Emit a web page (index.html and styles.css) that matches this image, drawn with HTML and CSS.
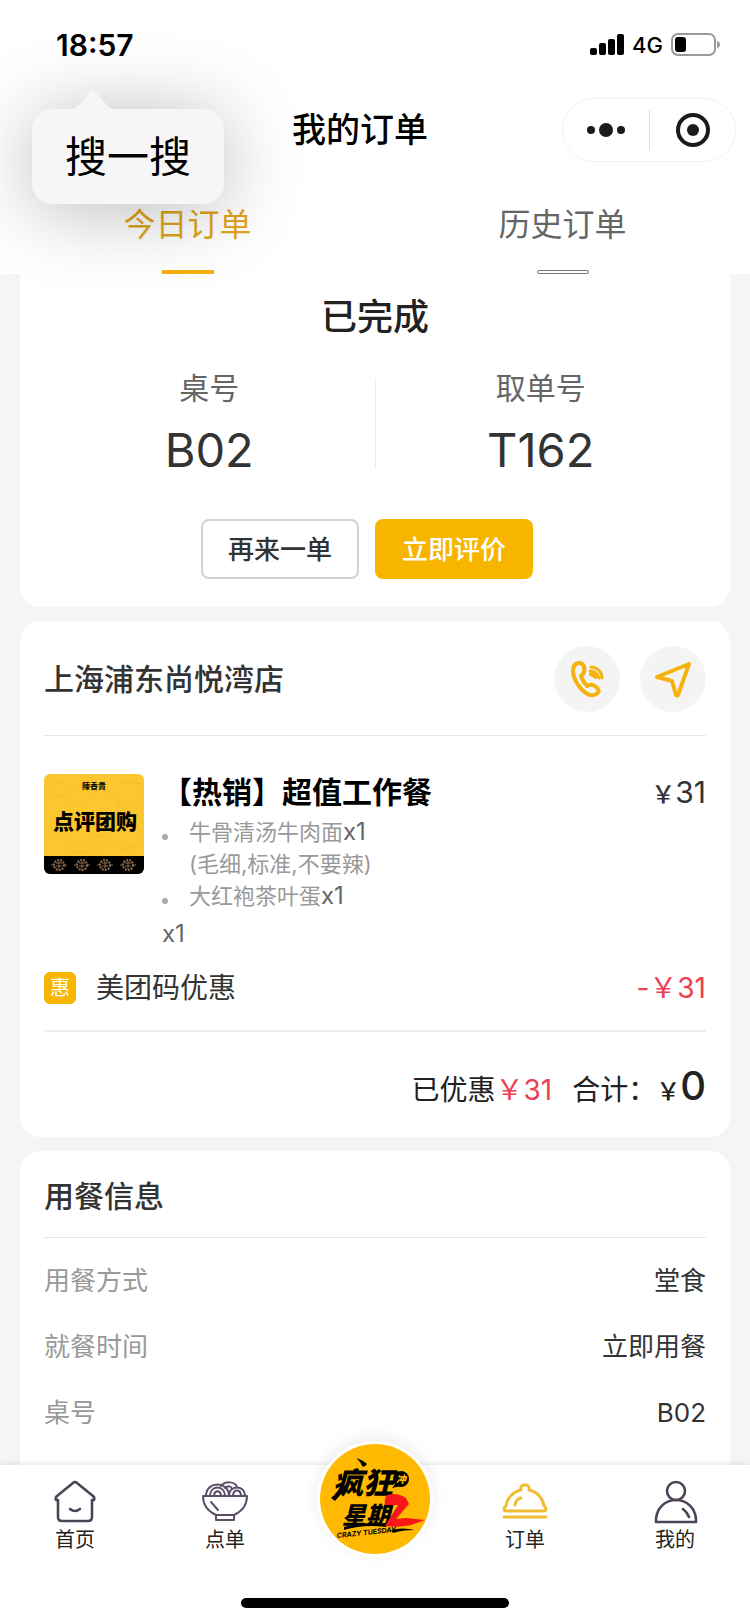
FILE: index.html
```html
<!DOCTYPE html>
<html lang="zh-CN">
<head>
  <meta charset="UTF-8" />
  <meta name="viewport" content="width=device-width, initial-scale=1.0"/>
  <title>我的订单</title>
  <link rel="stylesheet" href="styles.css">
</head>
<body>
  <!-- Header -->
  <header class="header">
    <div class="status-bar">
      <span class="time">18:57</span>
      <div class="status-icons">
        <svg width="34" height="22" viewBox="0 0 34 22">
          <rect x="0" y="14" width="7" height="7" rx="2"/>
          <rect x="9" y="9" width="7" height="12" rx="2"/>
          <rect x="18" y="5" width="7" height="16" rx="2"/>
          <rect x="27" y="0" width="7" height="21" rx="2"/>
        </svg>
        <span class="network">4G</span>
        <svg width="49" height="24" viewBox="0 0 49 24">
          <rect x="1" y="1" width="43" height="21" rx="6" fill="#fff" stroke="#999" stroke-width="2"/>
          <rect x="4" y="4" width="11" height="15" rx="3"/>
          <path d="M46 8c4 1 4 6 0 7z" fill="#999"/>
        </svg>
      </div>
    </div>

    <div class="nav-bar">
      <h1>我的订单</h1>
      <div class="capsule">
        <button type="button" aria-label="更多">
          <svg width="38" height="14" viewBox="0 0 38 14" fill="#1a1a1a">
            <circle cx="4" cy="7" r="4"/>
            <circle cx="19" cy="7" r="7"/>
            <circle cx="34" cy="7" r="4"/>
          </svg>
        </button>
        <button type="button" aria-label="关闭">
          <svg width="36" height="36" viewBox="0 0 36 36">
            <circle cx="18" cy="18" r="15" fill="none" stroke="#1a1a1a" stroke-width="4"/>
            <circle cx="18" cy="18" r="6" fill="#1a1a1a"/>
          </svg>
        </button>
      </div>
    </div>

    <div class="tabs">
      <button type="button" class="tab active">今日订单</button>
      <button type="button" class="tab">历史订单</button>
    </div>

    <a href="#search" class="popover">
      <svg class="popover-arrow" width="56" height="21" viewBox="0 0 56 21">
        <path d="M0 21C8 21 12 19 16 15L25 3Q28 -1 31 3L41 14C45 19 49 21 56 21Z" fill="#f6f6f6"/>
      </svg>
      搜一搜
    </a>
  </header>

  <!-- Order content -->
  <main class="content">
    <section class="card status-card">
      <h2>已完成</h2>
      <div class="numbers">
        <div class="number">
          <span>桌号</span>
          <strong>B02</strong>
        </div>
        <div class="divider"></div>
        <div class="number">
          <span>取单号</span>
          <strong>T162</strong>
        </div>
      </div>
      <div class="actions">
        <button type="button" class="btn">再来一单</button>
        <button type="button" class="btn btn-primary">立即评价</button>
      </div>
    </section>

    <section class="card">
      <div class="store">
        <h3>上海浦东尚悦湾店</h3>
        <div class="store-actions">
          <button type="button" class="round-btn" aria-label="电话">
            <svg width="36" height="40" viewBox="0 0 36 40" fill="none" stroke="#f5b20f" stroke-width="4" stroke-linejoin="round" stroke-linecap="round">
              <path d="M14 15C17 10 15 4 10 4C5 4 4 8 4 13C5 23 14 34 21 36C27 37 31 33 29 30C27 27 23 25 20 26L18 27C15 24 13 20 12 17Z"/>
              <path d="M22 8C28 8 33 13 33 19" stroke-width="3"/>
              <path d="M21 12C25 12 29 15 30 19" stroke-width="3"/>
              <path d="M22 15L27 18" stroke-width="4"/>
            </svg>
          </button>
          <button type="button" class="round-btn" aria-label="导航">
            <svg width="38" height="38" viewBox="0 0 38 38" fill="none" stroke="#f5b20f" stroke-width="4" stroke-linejoin="round">
              <path d="M35 4L3 17L18 21L22 35Q23 36 24 35Z"/>
            </svg>
          </button>
        </div>
      </div>

      <div class="item">
        <svg class="thumb" width="100" height="100" viewBox="0 0 100 100">
          <rect width="100" height="100" fill="#fcc62f"/>
          <g fill="none" stroke="#e8b02b" stroke-width="1" opacity=".4">
            <path d="M0 27Q14 16 24 27T48 22T72 27T100 16"/>
            <path d="M3 14Q14 4 24 13T44 7M74 12Q84 5 98 11"/>
            <path d="M2 66Q13 57 24 67T48 66T72 70T99 60"/>
            <path d="M20 76Q40 83 60 72T90 75M72 33Q85 26 98 35"/>
          </g>
          <text class="thumb-brand" x="50" y="15">陳香貴</text>
          <text class="thumb-title" x="51" y="55">点评团购</text>
          <rect y="82" width="100" height="18"/>
          <g fill="none" stroke="#8a6a4c">
            <g id="seal">
              <circle cx="15" cy="91" r="5" stroke-width="2" stroke-dasharray="2 1"/>
              <path d="M7 91h4M19 91h4M12 89h6M12 92h6M15 87v8"/>
            </g>
            <use href="#seal" x="23"/>
            <use href="#seal" x="46"/>
            <use href="#seal" x="69"/>
          </g>
        </svg>
        <div class="item-info">
          <h4>【热销】超值工作餐</h4>
          <ul>
            <li>牛骨清汤牛肉面<span>x1</span><br>(毛细,标准,不要辣)</li>
            <li>大红袍茶叶蛋<span>x1</span></li>
          </ul>
          <p>x1</p>
        </div>
        <div class="price"><small>￥</small>31</div>
      </div>

      <div class="discount">
        <span class="badge">惠</span>
        <span>美团码优惠</span>
        <span class="red">-￥31</span>
      </div>

      <div class="total">
        <span>已优惠<span class="red">￥31</span></span>
        <span>合计：</span>
        <span class="total-price"><small>￥</small>0</span>
      </div>
    </section>

    <section class="card info-card">
      <h3>用餐信息</h3>
      <dl>
        <div><dt>用餐方式</dt><dd>堂食</dd></div>
        <div><dt>就餐时间</dt><dd>立即用餐</dd></div>
        <div><dt>桌号</dt><dd>B02</dd></div>
      </dl>
    </section>
  </main>

  <!-- Bottom tab bar -->
  <footer class="footer">
    <nav class="tab-bar">
      <a href="#home">
        <svg width="48" height="48" viewBox="0 0 48 48" fill="none" stroke="#4d4357" stroke-width="2.6" stroke-linejoin="round" stroke-linecap="round">
          <path d="M24 5Q25 5 26 6L42 19Q44 21 43 23H41V40Q41 44 37 44H11Q7 44 7 40V23H5Q4 21 6 19L22 6Q23 5 24 5Z"/>
          <path d="M19 32Q24 36 29 32"/>
        </svg>
        首页
      </a>
      <a href="#menu">
        <svg width="48" height="48" viewBox="0 0 48 48" fill="none" stroke="#5c4e69" stroke-width="2" stroke-linejoin="round" stroke-linecap="round">
          <path d="M2 19H46Q46 32 33 38H15Q2 32 2 19Z"/>
          <path d="M15 38V43H33V38"/>
          <path d="M10 25L17 33"/>
          <path d="M5 18C6 4 27 4 28 18M9 18C10 8 23 8 24 18M13 18C14 13 19 13 20 18"/>
          <path d="M28 18C29 8 43 8 44 18M32 18C33 12 39 12 40 18"/>
          <path d="M20 9C24 4 34 4 36 10M24 11Q29 7 31 12"/>
        </svg>
        点单
      </a>
      <a href="#crazy-tuesday" class="promo" aria-label="疯狂星期二">
        <svg width="110" height="110" viewBox="0 0 110 110">
          <circle cx="55" cy="55" r="55" fill="#ffb900"/>
          <path d="M36 14Q43 16 47 20Q44 24 42 22Q41 18 36 14Z"/>
          <text class="logo-text logo-big" x="13" y="50">疯狂</text>
          <path d="M11 54Q21 46 31 35Q26 45 15 57Z"/>
          <text class="logo-text logo-mid" x="22" y="80">星期</text>
          <path d="M24 83Q44 77 68 80L66 83Q44 80 24 86Z"/>
          <circle cx="81" cy="35" r="8"/>
          <path d="M76 39L72 44L81 42Z"/>
          <text class="logo-text logo-small" x="81" y="39">冲</text>
          <path d="M67 51Q77 48 86 54L89 60L76 75L86 74L105 76L91 81Q79 84 65 82L78 61L65 61Q64 54 67 51Z" fill="#f71717"/>
          <path d="M71 86Q82 83 95 86Q82 86 73 89Z"/>
          <text class="logo-text logo-en" x="17" y="94" transform="rotate(-6 17 94)">CRAZY TUESDAY</text>
        </svg>
      </a>
      <a href="#orders">
        <svg width="48" height="48" viewBox="0 0 48 48" fill="none" stroke="#f0bd32" stroke-width="3" stroke-linejoin="round" stroke-linecap="round">
          <path d="M20 13C18 6 30 6 28 13C37 15 42 22 43 29Q45 30 45 32Q45 34 42 34H6Q3 34 3 32Q3 30 5 29C6 22 11 15 20 13Z"/>
          <path d="M14 28Q15 22 20 21"/>
          <path d="M3 40H45"/>
        </svg>
        订单
      </a>
      <a href="#me">
        <svg width="48" height="48" viewBox="0 0 48 48" fill="none" stroke="#4d4357" stroke-width="2.6" stroke-linejoin="round" stroke-linecap="round">
          <circle cx="25" cy="14" r="9"/>
          <path d="M5 45V42C6 31 14 23 25 23S44 31 45 42V45Z"/>
          <path d="M32 32Q36 35 38 40"/>
        </svg>
        我的
      </a>
    </nav>
    <div class="home-indicator"></div>
  </footer>
</body>
</html>
```

FILE: styles.css
```css
*,
*::before,
*::after {
  box-sizing: border-box;
}

body {
  margin: 0;
  height: 100vh;
  display: flex;
  flex-direction: column;
  background-color: #f5f5f5;
  color: #333;
  font-family: Inter, 'Noto Sans CJK SC', sans-serif;
}

h1, h2, h3, h4, p, ul, dl, dd {
  margin: 0;
  padding: 0;
}

button {
  padding: 0;
  border: none;
  background: none;
  color: inherit;
  font: inherit;
  cursor: pointer;
}

a {
  color: inherit;
  text-decoration: none;
}

svg {
  display: block;
  flex-shrink: 0;
}

/* Header */
.header {
  position: relative;
  z-index: 1;
  background-color: #fff;
}

.status-bar {
  height: 90px;
  padding: 0 30px 0 56px;
  display: flex;
  align-items: center;
  justify-content: space-between;
  color: #000;
}

.time {
  font-size: 30px;
  font-weight: 600;
}

.status-icons {
  display: flex;
  align-items: center;
  gap: 8px;
}

.network {
  font-size: 22px;
  font-weight: 500;
}

.nav-bar {
  height: 80px;
  padding: 0 14px;
  display: grid;
  grid-template-columns: 144px 1fr 174px;
  align-items: center;
}

.nav-bar h1 {
  grid-column: 2;
  text-align: center;
  font-size: 34px;
  font-weight: 500;
  line-height: 48px;
  color: #000;
}

.capsule {
  height: 64px;
  display: grid;
  grid-template-columns: 1fr 1fr;
  align-items: center;
  border: 1px solid #f2f2f2;
  border-radius: 32px;
}

.capsule button {
  height: 40px;
  display: flex;
  align-items: center;
  justify-content: center;
}

.capsule button + button {
  border-left: 1px solid #ddd;
}

.tabs {
  display: grid;
  grid-template-columns: 1fr 1fr;
}

.tab {
  height: 104px;
  display: flex;
  flex-direction: column;
  align-items: center;
  justify-content: space-between;
  padding-top: 31px;
  font-size: 32px;
  line-height: 48px;
  color: #666;
}

.tab::after {
  content: "";
  width: 52px;
  height: 4px;
  border: 1px solid #777;
  border-radius: 2px;
}

.tab.active {
  color: #e0a51b;
}

.tab.active::after {
  border: none;
  border-radius: 0;
  background-color: #f5b20f;
}

/* Long-press bubble over the title bar */
.popover {
  position: absolute;
  top: 109px;
  left: 32px;
  padding: 16px 33px;
  border-radius: 20px;
  background-color: #f6f6f6;
  box-shadow: 0 6px 80px rgba(0, 0, 0, 0.28);
  font-size: 42px;
  line-height: 63px;
  color: #000;
}

.popover-arrow {
  position: absolute;
  top: -20px;
  left: 32px;
}

/* Cards */
.content {
  flex: 1;
  min-height: 0;
  padding: 0 20px;
  display: flex;
  flex-direction: column;
  gap: 14px;
  overflow: hidden;
}

.card {
  flex-shrink: 0;
  padding: 0 24px;
  border-radius: 20px;
  background-color: #fff;
}

.card h3 {
  font-size: 30px;
  font-weight: 500;
  line-height: 44px;
}

.status-card {
  padding-top: 21px;
  padding-bottom: 28px;
  border-radius: 0 0 20px 20px;
}

.status-card h2 {
  text-align: center;
  font-size: 36px;
  font-weight: 500;
  line-height: 44px;
  color: #222;
}

.numbers {
  margin-top: 29px;
  display: flex;
  align-items: center;
}

.number {
  flex: 1;
  display: flex;
  flex-direction: column;
  align-items: center;
  gap: 14px;
}

.number span {
  font-size: 30px;
  line-height: 40px;
  color: #666;
}

.number strong {
  font-size: 47px;
  font-weight: 400;
  line-height: 56px;
}

.divider {
  width: 1px;
  height: 90px;
  background-color: #eee;
}

.actions {
  margin-top: 41px;
  display: flex;
  justify-content: center;
}

.btn {
  width: 158px;
  height: 60px;
  margin-right: 16px;
  padding-bottom: 4px;
  border: 2px solid #d2d2d2;
  border-radius: 8px;
  font-size: 26px;
  font-weight: 500;
}

.btn-primary {
  border-color: #f7b500;
  background-color: #f7b500;
  color: #fff;
}

/* Store and ordered items */
.store {
  padding: 25px 0 23px;
  display: flex;
  align-items: center;
  justify-content: space-between;
  border-bottom: 1px solid #e5e5e5;
}

.store-actions {
  display: flex;
  gap: 20px;
}

.round-btn {
  width: 66px;
  height: 66px;
  display: flex;
  align-items: center;
  justify-content: center;
  border-radius: 50%;
  background-color: #f4f4f4;
}

.item {
  margin-top: 38px;
  display: flex;
  gap: 18px;
}

.thumb {
  border-radius: 6px;
}

.thumb-brand {
  font-family: 'Noto Sans CJK TC', sans-serif;
  font-size: 8px;
  font-weight: 700;
  text-anchor: middle;
}

.thumb-title {
  font-size: 21px;
  font-weight: 900;
  text-anchor: middle;
}

.item-info {
  flex: 1;
}

.item-info h4 {
  font-size: 30px;
  font-weight: 600;
  line-height: 36px;
  color: #000;
}

.item-info ul {
  margin-top: 6px;
  list-style: none;
  font-size: 22px;
  line-height: 32px;
  color: #999;
}

.item-info li {
  display: flow-root;
  padding-left: 27px;
}

.item-info li::before {
  content: "";
  float: left;
  width: 6px;
  height: 6px;
  margin: 18px 0 0 -27px;
  border-radius: 50%;
  background-color: #aaa;
}

.item-info span {
  font-size: 24px;
  line-height: 30px;
  color: #666;
}

.item-info p {
  margin-top: 6px;
  font-size: 24px;
  line-height: 32px;
  color: #666;
}

.price {
  font-size: 30px;
  line-height: 36px;
}

.price small,
.total small {
  font-size: 24px;
  font-weight: 500;
}

.red {
  color: #eb4150;
}

.discount {
  padding: 22px 0 26px;
  display: flex;
  align-items: center;
  border-bottom: 2px solid #eee;
  font-size: 28px;
  line-height: 32px;
}

.discount .red {
  margin-left: auto;
}

.badge {
  width: 32px;
  height: 32px;
  margin-right: 20px;
  border-radius: 6px;
  background-color: #f7b500;
  color: #fff;
  text-align: center;
  font-size: 20px;
}

.total {
  padding: 30px 0 21px;
  display: flex;
  align-items: baseline;
  justify-content: flex-end;
  font-size: 28px;
  line-height: 48px;
  color: #222;
}

.total > span + span {
  margin-left: 20px;
}

.total > .total-price {
  margin-left: 0;
  font-size: 40px;
  font-weight: 500;
}

/* Dining info */
.info-card {
  flex: 1 0 auto;
  padding-top: 23px;
  border-radius: 20px 20px 0 0;
}

.info-card h3 {
  padding-bottom: 19px;
  border-bottom: 1px solid #e5e5e5;
}

.info-card dl {
  padding-top: 10px;
  font-size: 26px;
  line-height: 66px;
}

.info-card dl div {
  display: flex;
  justify-content: space-between;
}

.info-card dt {
  color: #999;
}

/* Footer */
.footer {
  position: relative;
  background-color: #fff;
  box-shadow: 0 -1px 6px rgba(0, 0, 0, 0.1);
}

.tab-bar {
  height: 133px;
  padding-top: 12px;
  display: grid;
  grid-template-columns: repeat(5, 1fr);
  justify-items: center;
  font-size: 20px;
  line-height: 30px;
  color: #222;
}

.tab-bar a {
  display: flex;
  flex-direction: column;
  align-items: center;
}

.promo {
  width: 116px;
  height: 116px;
  margin-top: -36px;
  border: 3px solid #fff;
  border-radius: 50%;
  background-color: #fff;
  box-shadow: 0 -4px 16px rgba(0, 0, 0, 0.08);
}

.logo-text {
  font-style: italic;
  font-weight: 900;
}

.logo-big {
  font-size: 30px;
}

.logo-mid {
  font-size: 24px;
}

.logo-small {
  font-size: 10px;
  fill: #ffb900;
  text-anchor: middle;
}

.logo-en {
  font-size: 7px;
  font-weight: 700;
}

.home-indicator {
  width: 268px;
  height: 10px;
  margin: 0 auto 16px;
  border-radius: 5px;
  background-color: #000;
}
```
